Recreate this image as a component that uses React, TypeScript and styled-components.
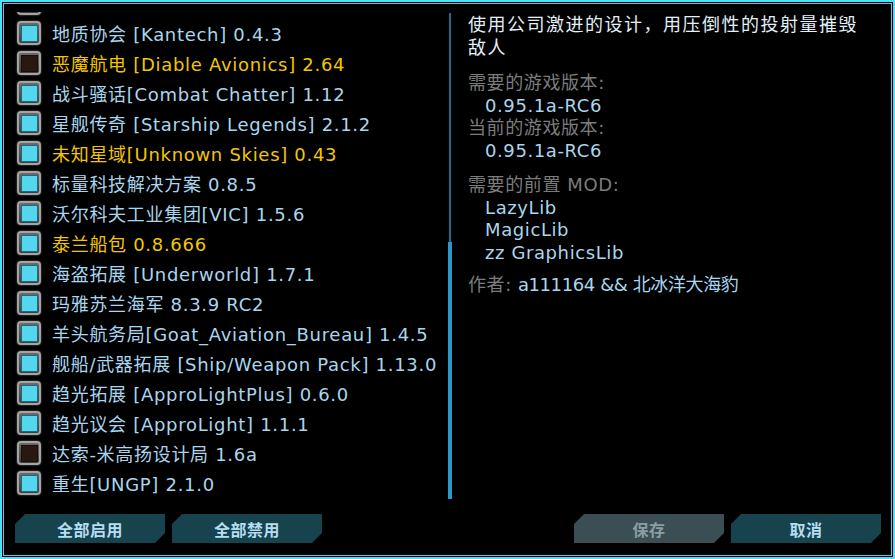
import React from "react";
import styled, { createGlobalStyle } from "styled-components";

const Global = createGlobalStyle`
  html, body { margin: 0; padding: 0; background: #000; }
  body { font-family: "DejaVu Sans", "Noto Sans CJK SC", sans-serif; }
`;

const Frame = styled.div`
  width: 895px;
  height: 559px;
  box-sizing: border-box;
  background: #000;
  border: 2px solid #4ae2fb;
  padding: 1px;
`;

const Inner = styled.div`
  height: 100%;
  box-sizing: border-box;
  border: 1px solid #3fd2ee;
  display: grid;
  grid-template-rows: 487px 1fr;
  padding: 8px 10px 0 9px;
`;

const Main = styled.div`
  display: grid;
  grid-template-columns: 427px 8px 4px 1fr;
  min-height: 0;
`;

const ListClip = styled.div`
  overflow: hidden;
  min-height: 0;
`;

const List = styled.div`
  margin-top: -24px;
  display: flex;
  flex-direction: column;
`;

const Row = styled.div`
  height: 30px;
  display: flex;
  align-items: center;
  gap: 11px;
  padding-left: 4px;
`;

const Check = styled.div`
  width: 24px;
  height: 24px;
  box-sizing: border-box;
  border-radius: 4px;
  background: linear-gradient(#6a6a6a, #3e3e3e);
  border: 2px solid #a4a4a4;
  box-shadow: 0 0 2px #777;
  display: flex;
  align-items: center;
  justify-content: center;
  flex: none;
`;

const CheckFill = styled.div<{ $on: boolean }>`
  width: 15px;
  height: 15px;
  border: 1px solid ${(p) => (p.$on ? "#1c6c80" : "#1a0c08")};
  background-color: ${(p) => (p.$on ? "#30c6e4" : "#3a2019")};
  background-image: radial-gradient(
    ${(p) => (p.$on ? "rgba(140,240,255,0.6)" : "rgba(0,0,0,0.45)")} 0.6px,
    transparent 0.9px
  );
  background-size: 2px 2px;
`;

const ModName = styled.span<{ $util: boolean }>`
  font-size: 18px;
  color: ${(p) => (p.$util ? "#f2c600" : "#a9d6ee")};
  white-space: nowrap;
  letter-spacing: 0.7px;
`;

const Track = styled.div`
  grid-column: 3;
  display: flex;
  flex-direction: column;
  align-items: center;
  padding-top: 1px;
`;

const TrackLine = styled.div`
  width: 2px;
  flex: 0 0 229px;
  background: #1c6c8c;
`;

const Thumb = styled.div`
  width: 4px;
  flex: 1;
  background: #2b98c8;
`;

const Detail = styled.div`
  padding: 2px 18px 0 16px;
  font-size: 18px;
  line-height: 22.5px;
  letter-spacing: 0.6px;
`;

const Title = styled.div`
  color: #e2f0f8;
  margin-bottom: 13px;
  letter-spacing: 1.5px;
`;

const Label = styled.div`
  color: #7c7c7c;
`;

const Value = styled.div`
  color: #a9d6ee;
  padding-left: 17px;
`;

const Group = styled.div<{ $gap: number }>`
  margin-bottom: ${(p) => p.$gap}px;
`;

const Author = styled.span`
  color: #a9d6ee;
  margin-left: 6px;
  letter-spacing: -0.4px;
`;

const Bar = styled.div`
  display: flex;
  align-items: flex-start;
  padding-top: 15px;
  padding-left: 2px;
  gap: 7px;
`;

const Spacer = styled.div`
  flex: 1;
`;

const Btn = styled.div<{ $disabled?: boolean }>`
  width: 150px;
  height: 29px;
  display: flex;
  align-items: center;
  justify-content: center;
  font-family: "Noto Sans CJK SC", sans-serif;
  font-weight: 700;
  font-size: 16px;
  letter-spacing: 0.5px;
  background: ${(p) => (p.$disabled ? "#3a4e54" : "#16434e")};
  color: ${(p) => (p.$disabled ? "#8a9ea4" : "#b6def0")};
  clip-path: polygon(10px 0, 100% 0, 100% calc(100% - 10px), calc(100% - 10px) 100%, 0 100%, 0 10px);
`;

const mods: { name: string; util?: boolean; on?: boolean }[] = [
  { name: "", on: true },
  { name: "地质协会 [Kantech] 0.4.3", on: true },
  { name: "恶魔航电 [Diable Avionics] 2.64", util: true, on: false },
  { name: "战斗骚话[Combat Chatter] 1.12", on: true },
  { name: "星舰传奇 [Starship Legends] 2.1.2", on: true },
  { name: "未知星域[Unknown Skies] 0.43", util: true, on: true },
  { name: "标量科技解决方案 0.8.5", on: true },
  { name: "沃尔科夫工业集团[VIC] 1.5.6", on: true },
  { name: "泰兰船包 0.8.666", util: true, on: true },
  { name: "海盗拓展 [Underworld] 1.7.1", on: true },
  { name: "玛雅苏兰海军 8.3.9 RC2", on: true },
  { name: "羊头航务局[Goat_Aviation_Bureau] 1.4.5", on: true },
  { name: "舰船/武器拓展 [Ship/Weapon Pack] 1.13.0", on: true },
  { name: "趋光拓展 [ApproLightPlus] 0.6.0", on: true },
  { name: "趋光议会 [ApproLight] 1.1.1", on: true },
  { name: "达索-米高扬设计局 1.6a", on: false },
  { name: "重生[UNGP] 2.1.0", on: true },
];

export default function App() {
  return (
    <>
      <Global />
      <Frame>
        <Inner>
          <Main>
            <ListClip>
              <List>
                {mods.map((m, i) => (
                  <Row key={i}>
                    <Check>
                      <CheckFill $on={!!m.on} />
                    </Check>
                    <ModName $util={!!m.util}>{m.name}</ModName>
                  </Row>
                ))}
              </List>
            </ListClip>
            <Track>
              <TrackLine />
              <Thumb />
            </Track>
            <Detail>
              <Title>使用公司激进的设计，用压倒性的投射量摧毁敌人</Title>
              <Group $gap={12}>
                <Label>需要的游戏版本:</Label>
                <Value>0.95.1a-RC6</Value>
                <Label>当前的游戏版本:</Label>
                <Value>0.95.1a-RC6</Value>
              </Group>
              <Group $gap={10}>
                <Label>需要的前置 MOD:</Label>
                <Value>LazyLib</Value>
                <Value>MagicLib</Value>
                <Value>zz GraphicsLib</Value>
              </Group>
              <Label>
                作者:<Author>a111164 &amp;&amp; 北冰洋大海豹</Author>
              </Label>
            </Detail>
          </Main>
          <Bar>
            <Btn>全部启用</Btn>
            <Btn>全部禁用</Btn>
            <Spacer />
            <Btn $disabled>保存</Btn>
            <Btn>取消</Btn>
          </Bar>
        </Inner>
      </Frame>
    </>
  );
}
